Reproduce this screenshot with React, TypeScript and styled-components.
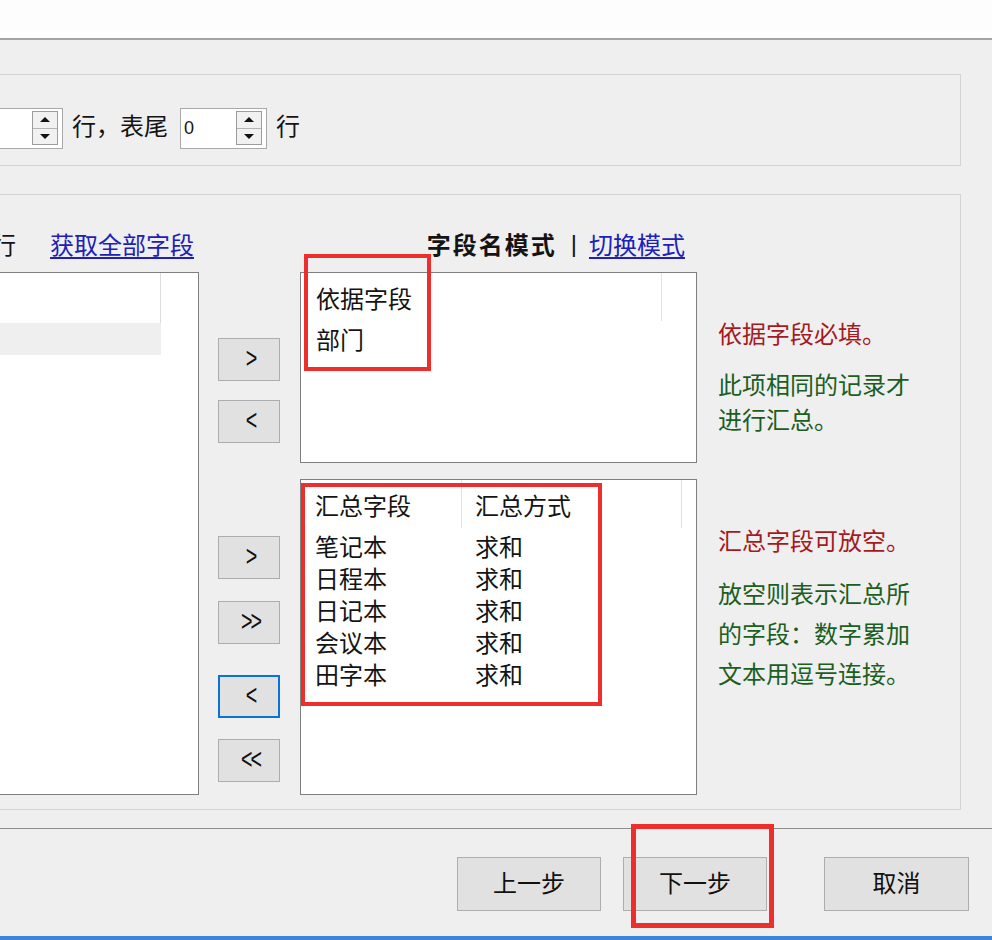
import React from "react";
import styled, { createGlobalStyle, css } from "styled-components";

const GlobalStyle = createGlobalStyle`
  html, body { margin: 0; padding: 0; background: #efeff0; overflow: hidden; }
  body { font-family: "Noto Sans CJK SC", "Microsoft YaHei", sans-serif; color: #141414; }
  * { box-sizing: border-box; }
`;

const Window = styled.div`
  width: 992px;
  height: 940px;
  display: flex;
  flex-direction: column;
  overflow: hidden;
  background: #efeff0;
`;

const TitleArea = styled.div`
  flex: none;
  height: 40px;
  background: #fdfdfd;
  border-bottom: 2px solid #a3a3a3;
`;

const Content = styled.div`
  flex: none;
  display: flex;
  flex-direction: column;
  padding-top: 34px;
`;

const GroupBox = styled.div<{ $h: number; $mt?: number }>`
  margin-left: -30px;
  width: 991px;
  height: ${(p) => p.$h}px;
  margin-top: ${(p) => p.$mt ?? 0}px;
  border: 1px solid #d3d3d3;
`;

const SpinRow = styled(GroupBox)`
  display: flex;
  align-items: flex-start;
  padding: 33px 0 0 5px;
`;

const Label = styled.span<{ $ml?: number }>`
  font-size: 24px;
  line-height: 34px;
  margin-left: ${(p) => p.$ml ?? 0}px;
  white-space: nowrap;
`;

const Spinner = styled.div<{ $ml?: number }>`
  width: 87px;
  height: 41px;
  margin-left: ${(p) => p.$ml ?? 0}px;
  background: #fff;
  border: 1px solid #a9a9a9;
  display: flex;
  padding: 2px 4px 3px 3px;
`;

const SpinValue = styled.div`
  flex: 1;
  font-family: "Liberation Sans", Arial, sans-serif;
  font-size: 18px;
  line-height: 1;
  padding-top: 8px;
`;

const SpinCol = styled.div`
  width: 26px;
  display: flex;
  flex-direction: column;
  border: 1px solid #9c9c9c;
  background: #f1f1f1;
`;

const SpinHalf = styled.div<{ $dir: "up" | "down" }>`
  flex: 1;
  display: flex;
  align-items: center;
  justify-content: center;
  ${(p) =>
    p.$dir === "down" &&
    css`
      border-top: 1px solid #b4b4b4;
    `}
  &::after {
    content: "";
    width: 0;
    height: 0;
    border-left: 5px solid transparent;
    border-right: 5px solid transparent;
    ${(p) =>
      p.$dir === "up"
        ? css`
            border-bottom: 5px solid #111;
          `
        : css`
            border-top: 5px solid #111;
          `}
  }
`;

const FieldGrid = styled(GroupBox)`
  display: grid;
  grid-template-columns: 228px 101px 397px 1fr;
  grid-template-rows: 77px 191px 16px 316px;
`;

const HeaderCell = styled.div<{ $col: string; $justify?: string }>`
  grid-row: 1;
  grid-column: ${(p) => p.$col};
  display: flex;
  align-items: flex-end;
  justify-content: ${(p) => p.$justify ?? "flex-start"};
  padding-bottom: 11px;
  padding-right: ${(p) => (p.$justify === "flex-end" ? 12 : 0)}px;
  white-space: nowrap;
`;

const Link = styled.a<{ $ml?: number }>`
  font-size: 24px;
  line-height: 34px;
  color: #2020b8;
  text-decoration: underline;
  text-underline-offset: 3px;
  margin-left: ${(p) => p.$ml ?? 0}px;
  cursor: pointer;
`;

const ModeTitle = styled.span`
  font-size: 24px;
  line-height: 34px;
  font-weight: 700;
  letter-spacing: 2px;
`;

const Separator = styled.span`
  font-family: "Liberation Sans", Arial, sans-serif;
  font-size: 24px;
  line-height: 34px;
  margin: 0 12px 0 14px;
`;

const ListBox = styled.div<{ $row: string; $col: number }>`
  grid-row: ${(p) => p.$row};
  grid-column: ${(p) => p.$col};
  position: relative;
  background: #fff;
  border: 1px solid #7f7f7f;
`;

const LeftHeader = styled.div`
  width: 189px;
  height: 50px;
  border-right: 1px solid #dcdcdc;
`;

const LeftSelected = styled.div`
  width: 189px;
  height: 32px;
  background: #efefef;
`;

const ListHead = styled.div`
  display: flex;
  height: 51px;
`;

const HeadCol = styled.div<{ $w: number; $pl: number }>`
  width: ${(p) => p.$w}px;
  height: 48px;
  padding: 9px 0 0 ${(p) => p.$pl}px;
  font-size: 24px;
  line-height: 32px;
  border-right: 1px solid #e2e2e2;
  white-space: nowrap;
`;

const Row = styled.div`
  display: flex;
  height: 32px;
`;

const Cell = styled.div<{ $w: number; $pl: number }>`
  width: ${(p) => p.$w}px;
  padding-left: ${(p) => p.$pl}px;
  font-size: 24px;
  line-height: 30px;
  white-space: nowrap;
`;

const Annotation = styled.div<{ $l: number; $t: number; $w: number; $h: number; $bw: number }>`
  position: absolute;
  left: ${(p) => p.$l}px;
  top: ${(p) => p.$t}px;
  width: ${(p) => p.$w}px;
  height: ${(p) => p.$h}px;
  border: ${(p) => p.$bw}px solid #ec2e2c;
  pointer-events: none;
`;

const ButtonStack = styled.div<{ $row: string }>`
  grid-row: ${(p) => p.$row};
  grid-column: 2;
  display: flex;
  flex-direction: column;
  align-items: flex-start;
`;

const ArrowBtn = styled.button<{ $mt: number; $focused?: boolean }>`
  margin: ${(p) => p.$mt}px 0 0 19px;
  width: 62px;
  height: 43px;
  padding: 0 0 3px;
  background: #e1e1e1;
  border: ${(p) => (p.$focused ? "2px solid #0a74d6" : "1px solid #adadad")};
  display: flex;
  align-items: center;
  justify-content: center;
  color: #111;
`;

const ArrowGlyph = styled.span`
  display: inline-block;
  font-family: "Liberation Sans", Arial, sans-serif;
  font-size: 29px;
  line-height: 1;
  letter-spacing: -3px;
  padding-left: 3px;
  transform: scaleX(0.68);
`;

const Notes = styled.div<{ $row: string }>`
  grid-row: ${(p) => p.$row};
  grid-column: 4;
  padding: 44px 0 0 21px;
  display: flex;
  flex-direction: column;
`;

const NoteRed = styled.div`
  font-size: 24px;
  line-height: 34px;
  color: #a51a20;
  white-space: nowrap;
`;

const NoteGreen = styled.div<{ $lh: number; $mt: number }>`
  font-size: 24px;
  line-height: ${(p) => p.$lh}px;
  margin-top: ${(p) => p.$mt}px;
  color: #1c5e1e;
  white-space: nowrap;
`;

const Footer = styled.div`
  flex: none;
  margin-top: 18px;
  height: 108px;
  border-top: 1px solid #8e8e8e;
  padding: 28px 23px 0 0;
  display: flex;
  justify-content: flex-end;
  align-items: flex-start;
`;

const WizardBtn = styled.button<{ $w: number; $ml?: number }>`
  position: relative;
  width: ${(p) => p.$w}px;
  height: 54px;
  margin-left: ${(p) => p.$ml ?? 0}px;
  background: #e1e1e1;
  border: 1px solid #adadad;
  font-family: "Noto Sans CJK SC", sans-serif;
  font-size: 24px;
  line-height: 30px;
  color: #111;
  padding: 0 0 5px;
`;

const BlueBar = styled.div`
  flex: none;
  height: 4px;
  background: #3a86d8;
`;

const summaryRows = ["笔记本", "日程本", "日记本", "会议本", "田字本"];

export default function App() {
  return (
    <>
      <GlobalStyle />
      <Window>
        <TitleArea />
        <Content>
          <SpinRow $h={92}>
            <Spinner>
              <SpinValue />
              <SpinCol>
                <SpinHalf $dir="up" />
                <SpinHalf $dir="down" />
              </SpinCol>
            </Spinner>
            <Label $ml={9}>行，表尾</Label>
            <Spinner $ml={12}>
              <SpinValue>0</SpinValue>
              <SpinCol>
                <SpinHalf $dir="up" />
                <SpinHalf $dir="down" />
              </SpinCol>
            </Spinner>
            <Label $ml={9}>行</Label>
          </SpinRow>

          <FieldGrid $h={616} $mt={28}>
            <HeaderCell $col="1 / 3">
              <Label $ml={21}>行</Label>
              <Link $ml={34}>获取全部字段</Link>
            </HeaderCell>
            <HeaderCell $col="3" $justify="flex-end">
              <ModeTitle>字段名模式</ModeTitle>
              <Separator>|</Separator>
              <Link>切换模式</Link>
            </HeaderCell>

            <ListBox $row="2 / 5" $col={1}>
              <LeftHeader />
              <LeftSelected />
            </ListBox>

            <ButtonStack $row="2">
              <ArrowBtn $mt={66}>
                <ArrowGlyph>&gt;</ArrowGlyph>
              </ArrowBtn>
              <ArrowBtn $mt={19}>
                <ArrowGlyph>&lt;</ArrowGlyph>
              </ArrowBtn>
            </ButtonStack>
            <ButtonStack $row="4">
              <ArrowBtn $mt={57}>
                <ArrowGlyph>&gt;</ArrowGlyph>
              </ArrowBtn>
              <ArrowBtn $mt={22}>
                <ArrowGlyph>&gt;&gt;</ArrowGlyph>
              </ArrowBtn>
              <ArrowBtn $mt={31} $focused>
                <ArrowGlyph>&lt;</ArrowGlyph>
              </ArrowBtn>
              <ArrowBtn $mt={21}>
                <ArrowGlyph>&lt;&lt;</ArrowGlyph>
              </ArrowBtn>
            </ButtonStack>

            <ListBox $row="2" $col={3}>
              <ListHead>
                <HeadCol $w={361} $pl={15}>
                  依据字段
                </HeadCol>
              </ListHead>
              <Row>
                <Cell $w={361} $pl={15}>
                  部门
                </Cell>
              </Row>
              <Annotation $l={3} $t={-19} $w={127} $h={117} $bw={4} />
            </ListBox>

            <ListBox $row="4" $col={3}>
              <ListHead>
                <HeadCol $w={161} $pl={14}>
                  汇总字段
                </HeadCol>
                <HeadCol $w={220} $pl={13}>
                  汇总方式
                </HeadCol>
              </ListHead>
              {summaryRows.map((name) => (
                <Row key={name}>
                  <Cell $w={161} $pl={14}>
                    {name}
                  </Cell>
                  <Cell $w={200} $pl={13}>
                    求和
                  </Cell>
                </Row>
              ))}
              <Annotation $l={0} $t={3} $w={301} $h={223} $bw={4} />
            </ListBox>

            <Notes $row="2">
              <NoteRed>依据字段必填。</NoteRed>
              <NoteGreen $lh={35} $mt={16}>
                此项相同的记录才
                <br />
                进行汇总。
              </NoteGreen>
            </Notes>
            <Notes $row="4">
              <NoteRed>汇总字段可放空。</NoteRed>
              <NoteGreen $lh={40} $mt={16}>
                放空则表示汇总所
                <br />
                的字段：数字累加
                <br />
                文本用逗号连接。
              </NoteGreen>
            </Notes>
          </FieldGrid>

          <Footer>
            <WizardBtn $w={144}>上一步</WizardBtn>
            <WizardBtn $w={144} $ml={22}>
              下一步
              <Annotation $l={7} $t={-34} $w={143} $h={104} $bw={5} />
            </WizardBtn>
            <WizardBtn $w={145} $ml={57}>
              取消
            </WizardBtn>
          </Footer>
          <BlueBar />
        </Content>
      </Window>
    </>
  );
}
